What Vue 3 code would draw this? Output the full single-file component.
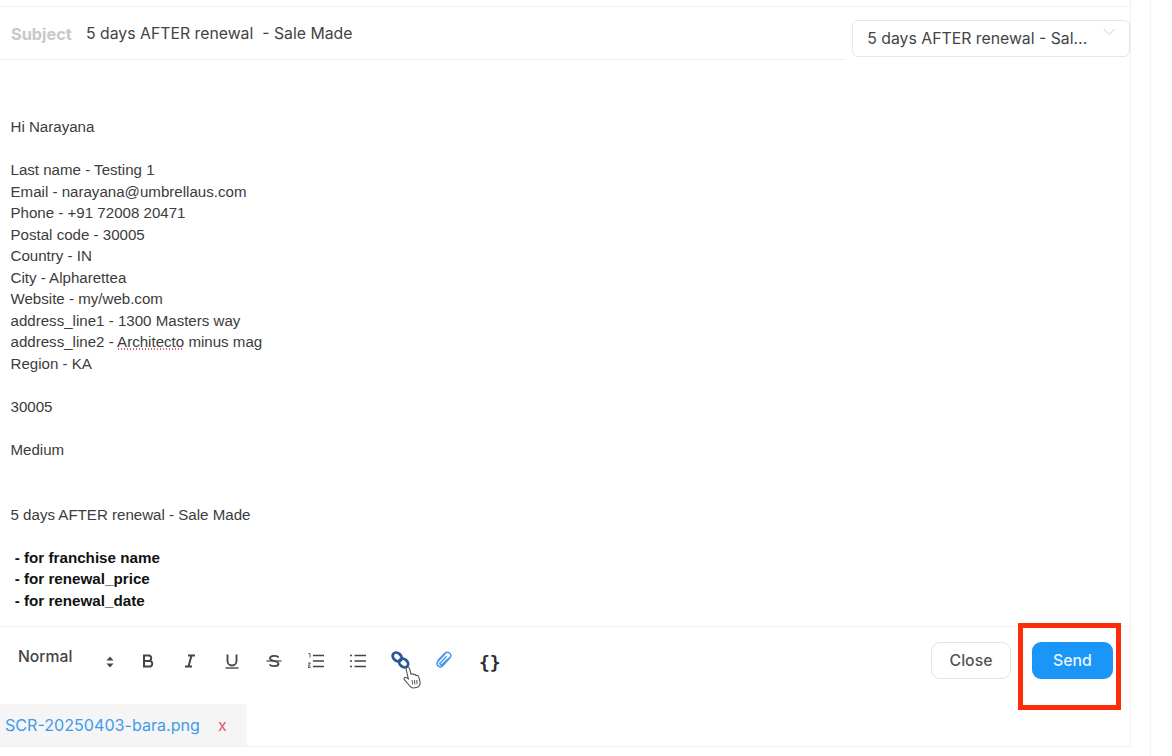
<template>
  <div class="page">
    <div class="panel">
      <header class="subject-row">
        <div class="subject">
          <span class="subject-label">Subject</span>
          <span class="subject-text">5 days AFTER renewal &nbsp;- Sale Made</span>
        </div>
        <div class="select">
          <span>5 days AFTER renewal - Sal...</span>
          <svg class="chev" width="14" height="8" viewBox="0 0 14 8"><path d="M1.5 1 L7 6.5 L12.5 1" fill="none" stroke="#cfcfcf" stroke-width="1"/></svg>
        </div>
      </header>
      <main class="body">
        <div v-for="(l, i) in lines" :key="i" class="line" :class="{ strong: l.startsWith(' -') }">
          <template v-if="l === 'SPELL'">address_line2 - <span class="spell">Architecto</span> minus mag</template>
          <template v-else>{{ l || '\u00a0' }}</template>
        </div>
      </main>
      <footer class="toolbar">
        <div class="tools">
          <span class="normal">Normal</span>
          <svg class="t sort" width="8" height="12" viewBox="0 0 8 12"><path d="M4 0.5 L7.5 4.5 H0.5 Z M4 11.5 L0.5 7.5 H7.5 Z" fill="#444"/></svg>
          <svg class="t" width="18" height="18" viewBox="0 0 18 18"><path d="M5 3.5 H10.5 A3 3 0 0 1 10.5 9 H5 Z M5 9 H11.5 A3 3 0 0 1 11.5 14.5 H5 Z" fill="none" stroke="#444" stroke-width="2"/></svg>
          <svg class="t" width="18" height="18" viewBox="0 0 18 18"><path d="M7 3.5 H14 M4 14.5 H11 M10.5 3.5 L7.5 14.5" fill="none" stroke="#444" stroke-width="2"/></svg>
          <svg class="t" width="18" height="18" viewBox="0 0 18 18"><path d="M4.5 2.5 V9 A4.5 4.5 0 0 0 13.5 9 V2.5" fill="none" stroke="#444" stroke-width="1.8"/><path d="M2.5 16 H15.5" stroke="#444" stroke-width="1.4"/></svg>
          <svg class="t" width="18" height="18" viewBox="0 0 18 18"><path d="M13.5 5.5 C12.5 3.5 5 3 5 6.5 C5 9.5 13.5 8.5 13.5 11.8 C13.5 15 6 14.8 4.5 12.5" fill="none" stroke="#444" stroke-width="1.8"/><path d="M1.5 9 H16.5" stroke="#444" stroke-width="1.2"/></svg>
          <svg class="t" width="18" height="18" viewBox="0 0 18 18"><path d="M6 3.5 H17 M6 9 H17 M6 14.5 H17" stroke="#444" stroke-width="1.7"/><path d="M1.5 1.5 H3 V5.5 M1 11 H3.5 L1 14 H3.5 M1 15.5 H3.5" fill="none" stroke="#444" stroke-width="0.9"/></svg>
          <svg class="t" width="18" height="18" viewBox="0 0 18 18"><path d="M5.5 3.5 H17 M5.5 9 H17 M5.5 14.5 H17" stroke="#444" stroke-width="1.7"/><path d="M1 3.5 H3 M1 9 H3 M1 14.5 H3" stroke="#444" stroke-width="1.7"/></svg>
          <svg class="t link" width="19" height="19" viewBox="0 0 19 19"><g fill="none" stroke="#2b5797" stroke-width="2.8"><ellipse cx="6.2" cy="6" rx="5" ry="3.8" transform="rotate(40 6.2 6)"/><ellipse cx="12.6" cy="12" rx="5" ry="3.8" transform="rotate(40 12.6 12)"/></g></svg>
          <svg class="t clip" width="18" height="18" viewBox="0 0 18 18"><path d="M5.4 11.8 L11.6 5.2 M2.8 9.6 L9.8 2.4 C13.2 -0.6 17.6 3.4 15 6.8 L8 14.6 C5.4 17.6 0.2 14.6 2.8 10.4 L10.4 2.6 M14.4 6.8 L7.2 13.4 C5.8 14.8 4 13 5.4 11.6" fill="none" stroke="#4a97e4" stroke-width="1.5"/></svg>
          <span class="braces">{}</span>
          <svg class="cursor" width="20" height="24" viewBox="0 0 20 24"><path d="M5.2 1.6 C6.4 1 7.4 1.8 7.7 3 L9 8.2 C10 7.6 11 7.7 11.6 8.6 C12.5 8.2 13.5 8.5 14 9.4 C15.2 9.2 16.4 9.9 16.8 11.2 L18 15.5 C18.5 18 17.5 20 15.6 21.2 L11.4 22 C9.6 22.2 8.6 21.2 7.8 20 L2.4 13.6 C1.4 12.4 2.6 10.8 4 11.4 L6.4 13 L4.2 3.8 C3.9 2.8 4.3 2 5.2 1.6 Z" fill="#fff" stroke="#555" stroke-width="1.1"/><path d="M10 14 L10.6 18.4 M12.4 14 L12.9 18.4 M14.8 14 L15 18.2" stroke="#555" stroke-width="1"/></svg>
        </div>
        <div class="actions">
          <button class="btn close" type="button">Close</button>
          <div class="send-mark"><button class="btn send" type="button">Send</button></div>
        </div>
      </footer>
      <div class="attachment">
        <span class="file">SCR-20250403-bara.png</span>
        <span class="x">x</span>
      </div>
    </div>
  </div>
</template>

<script setup>
const lines = [
  'Hi Narayana', '',
  'Last name - Testing 1',
  'Email - narayana@umbrellaus.com',
  'Phone - +91 72008 20471',
  'Postal code - 30005',
  'Country - IN',
  'City - Alpharettea',
  'Website - my/web.com',
  'address_line1 - 1300 Masters way',
  'SPELL',
  'Region - KA', '',
  '30005', '',
  'Medium', '', '',
  '5 days AFTER renewal - Sale Made', '',
  ' - for franchise name',
  ' - for renewal_price',
  ' - for renewal_date'
]
</script>

<style>
html, body { margin: 0; background: #fff; }
</style>

<style scoped>
.page {
  width: 1151px;
  height: 756px;
  overflow: hidden;
  box-sizing: border-box;
  border-right: 1px solid #f3f3f3;
  font-family: Inter, "Liberation Sans", sans-serif;
  background: #fff;
  color: #3f3f3f;
}
.panel {
  width: 1131px;
  height: 747px;
  padding-top: 7px;
  box-sizing: border-box;
  border-right: 1px solid #f0f0f0;
  border-bottom: 1px solid #f0f0f0;
  background: linear-gradient(#f2f2f2, #f2f2f2) top 6px left 0 / 100% 1px no-repeat;
  display: flex;
  flex-direction: column;
}
.subject-row {
  height: 53px;
  flex: none;
  display: flex;
  align-items: flex-start;
}
.subject {
  width: 847px;
  height: 53px;
  box-sizing: border-box;
  border-bottom: 1px solid #efefef;
  padding: 17px 0 0 11px;
  display: flex;
  gap: 14px;
  font-size: 15.8px;
  line-height: 20px;
}
.subject-label { color: #c8c8c8; font-weight: 700; width: 61px; font-size: 16.3px; }
.subject-text { color: #444; white-space: nowrap; }
.select {
  margin: 13px 0 0 6px;
  width: 278px;
  height: 37px;
  box-sizing: border-box;
  border: 1px solid #e6e6e6;
  border-radius: 6px;
  padding: 8px 0 0 14px;
  font-size: 15.8px;
  line-height: 19px;
  color: #444;
  position: relative;
  white-space: nowrap;
}
.chev { position: absolute; right: 13px; top: 7px; }
.body {
  flex: 1;
  padding: 56px 0 0 10.5px;
  font-family: "Liberation Sans", Arial, sans-serif;
  font-size: 15.1px;
  line-height: 21.55px;
  color: #3c3c3c;
  min-height: 0;
}
.line { white-space: pre; height: 21.55px; }
.strong { font-weight: 700; color: #111; font-size: 15.2px; }
.spell {
  background-image: radial-gradient(circle, #e0567f 0.7px, transparent 0.8px);
  background-size: 3px 2px;
  background-repeat: repeat-x;
  background-position: 0 100%;
}
.toolbar {
  height: 77px;
  flex: none;
  border-top: 1px solid #f2f2f2;
  display: flex;
  justify-content: space-between;
  align-items: flex-start;
}
.tools {
  position: relative;
  display: flex;
  align-items: center;
  height: 66px;
  padding-left: 18px;
}
.normal { font-size: 15.7px; font-weight: 500; color: #444; width: 88px; margin-top: -8px; }
.t { flex: none; margin-right: 24px; margin-top: 1px; }
.sort { margin-right: 25px; margin-top: 3px; }
.link { margin-right: 25px; margin-top: 0; }
.clip { margin-right: 26px; margin-top: -1px; }
.braces { font-family: "DejaVu Sans Mono", monospace; font-size: 18px; font-weight: 700; color: #2e2e2e; margin-top: 4px; }
.cursor { position: absolute; left: 402px; top: 39px; }
.actions { display: flex; align-items: flex-start; }
.btn {
  font-family: inherit;
  font-size: 15.8px;
  font-weight: 500;
  border-radius: 9px;
  box-sizing: border-box;
  height: 37px;
  width: 81px;
  padding: 0;
}
.close { background: #fff; border: 1px solid #e2e2e2; color: #555; width: 80px; margin-top: 15px; margin-right: 7px; }
.send-mark {
  width: 103px;
  height: 87px;
  box-sizing: border-box;
  border: 5px solid #fb2d0a;
  margin-top: -4px;
  margin-right: 9px;
  padding: 14px 0 0 9px;
  background: #fff;
}
.send { background: #1a96f8; border: 0; color: #e8f4ff; }
.attachment {
  position: relative;
  height: 42px;
  width: 247px;
  background: #f5f5f5;
  flex: none;
  display: flex;
  align-items: center;
  padding-left: 5px;
  box-sizing: border-box;
  font-size: 16.1px;
}
.file { color: #3f9bec; width: 213px; flex: none; }
.x { color: #e4566f; }
</style>
